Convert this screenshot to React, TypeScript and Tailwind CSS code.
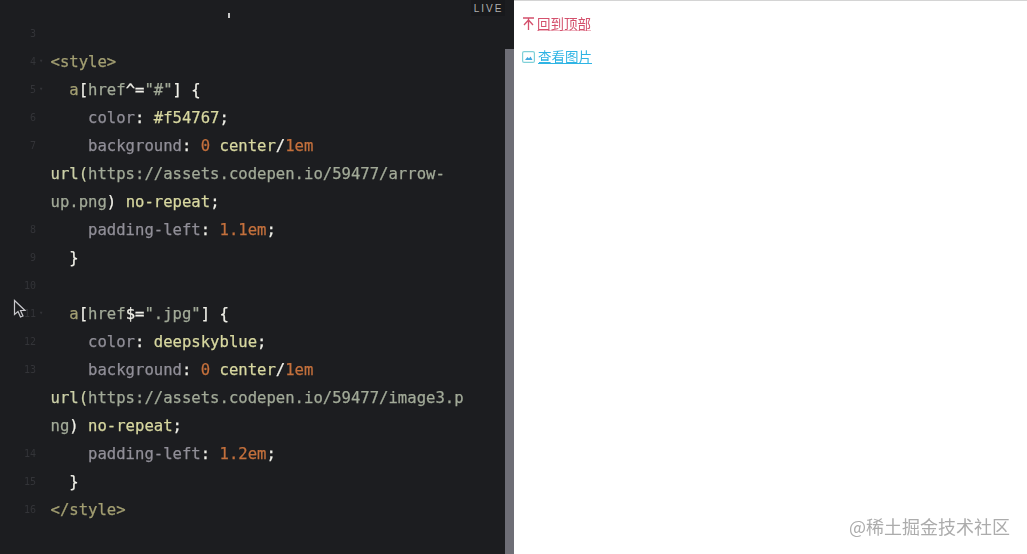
import React from 'react';

const T = 'text-[#a39f72]';
const P = 'text-[#918f98]';
const W = 'text-[#f0f0e8]';
const V = 'text-[#d8d8a0]';
const S = 'text-[#a2aa98]';
const U = 'text-[#ccd0a8]';
const N = 'text-[#c4703c]';

type Seg = [string, string];
interface Line {
  no?: number;
  fold?: boolean;
  segs?: Seg[];
}

const lines: Line[] = [
  { no: 3 },
  { no: 4, fold: true, segs: [[T, '<style>']] },
  { no: 5, fold: true, segs: [[T, '  a'], [W, '['], [S, 'href'], [W, '^='], [S, '"#"'], [W, '] {']] },
  { no: 6, segs: [[P, '    color'], [W, ': '], [V, '#f54767'], [W, ';']] },
  { no: 7, segs: [[P, '    background'], [W, ': '], [N, '0 '], [V, 'center'], [W, '/'], [N, '1em']] },
  { segs: [[U, 'url('], [S, 'https://assets.codepen.io/59477/arrow-']] },
  { segs: [[S, 'up.png'], [W, ') '], [V, 'no-repeat'], [W, ';']] },
  { no: 8, segs: [[P, '    padding-left'], [W, ': '], [N, '1.1em'], [W, ';']] },
  { no: 9, segs: [[W, '  }']] },
  { no: 10 },
  { no: 11, fold: true, segs: [[T, '  a'], [W, '['], [S, 'href'], [W, '$='], [S, '".jpg"'], [W, '] {']] },
  { no: 12, segs: [[P, '    color'], [W, ': '], [V, 'deepskyblue'], [W, ';']] },
  { no: 13, segs: [[P, '    background'], [W, ': '], [N, '0 '], [V, 'center'], [W, '/'], [N, '1em']] },
  { segs: [[U, 'url('], [S, 'https://assets.codepen.io/59477/image3.p']] },
  { segs: [[S, 'ng'], [W, ') '], [V, 'no-repeat'], [W, ';']] },
  { no: 14, segs: [[P, '    padding-left'], [W, ': '], [N, '1.2em'], [W, ';']] },
  { no: 15, segs: [[W, '  }']] },
  { no: 16, segs: [[T, '</style>']] },
];

const App: React.FC = () => {
  return (
    <div className="relative flex h-[554px] w-[1027px] overflow-hidden bg-white">
      {/* Editor */}
      <div className="relative flex w-[505px] shrink-0 flex-col bg-[#1c1d20] pt-[20px] font-['DejaVu_Sans_Mono',monospace] blur-[0.6px]">
        {lines.map((line, i) => (
          <div key={i} className="flex h-[28px] items-center">
            <div className="mb-[2px] flex w-[51px] shrink-0 items-center">
              <span className="w-[36px] shrink-0 text-right text-[10px] text-[#333438]">{line.no}</span>
              {line.fold && <span className="ml-[3px] text-[7px] text-[#333438]">▾</span>}
            </div>
            <pre className="ml-[-0.5px] font-['DejaVu_Sans_Mono',monospace] text-[15.6px] leading-[28px] font-normal [-webkit-text-stroke:0.25px]">
              {line.segs?.map((s, j) => (
                <span key={j} className={s[0]}>{s[1]}</span>
              ))}
            </pre>
          </div>
        ))}
      </div>

      {/* Scrollbar */}
      <div className="flex w-[9px] shrink-0 flex-col bg-[#1c1d20]">
        <div className="mt-[49px] flex-1 bg-[#6e6e76]" />
      </div>

      {/* Preview */}
      <div className="flex flex-1 flex-col gap-[16px] border-t border-[#d4d4d4] pt-[14px] pl-[8px] font-['Noto_Sans_CJK_SC',sans-serif] text-[13.5px] leading-[17px] blur-[0.5px]">
        <a className="flex items-center gap-[2px] text-[#d4506c]">
          <svg width="13" height="15" viewBox="0 0 13 15" fill="none" stroke="#d4506c" strokeWidth="1.3">
            <path d="M1 2h11M6.5 2v12M6.5 4L2 9M6.5 4l4.500 5" />
          </svg>
          <span className="underline decoration-[#eeb4c0]">回到顶部</span>
        </a>
        <a className="flex items-center gap-[3px] text-[#2fb4e4]">
          <svg width="13" height="12" viewBox="0 0 13 12" fill="none">
            <rect x="0.6" y="0.6" width="11.800" height="10.800" rx="1.500" stroke="#7fd0d8" strokeWidth="1.200" />
            <path d="M3 9l2.500-3 1.500 1.500 1.500-2L10.500 9z" fill="#3fa8e0" />
          </svg>
          <span className="underline">查看图片</span>
        </a>
      </div>

      {/* LIVE badge */}
      <div className="absolute top-0 left-[471px] flex h-[16px] w-[34px] items-center justify-center bg-[#18191c] pl-[1px] font-['Liberation_Sans',sans-serif] text-[10px] font-normal tracking-[2px] text-[#b0b0b0]">
        LIVE
      </div>

      {/* Small caret tick */}
      <div className="absolute top-[13px] left-[228px] h-[5px] w-[2px] bg-[#c8c8c8]" />

      {/* Mouse pointer */}
      <svg className="absolute top-[299px] left-[13px]" width="14" height="20" viewBox="0 0 14 20" fill="#1c1d20" stroke="#c8c8cc" strokeWidth="1.200">
        <path d="M1.500 1.500v14l3.500-3 2.500 5.500 2.500-1-2.500-5.500h4.500z" />
      </svg>

      {/* Watermark */}
      <div className="absolute top-[514px] left-[849px] font-['Noto_Sans_CJK_SC',sans-serif] text-[18px] leading-[25px] whitespace-nowrap text-[#acacac] blur-[0.3px]">
        @稀土掘金技术社区
      </div>
    </div>
  );
};

export default App;
